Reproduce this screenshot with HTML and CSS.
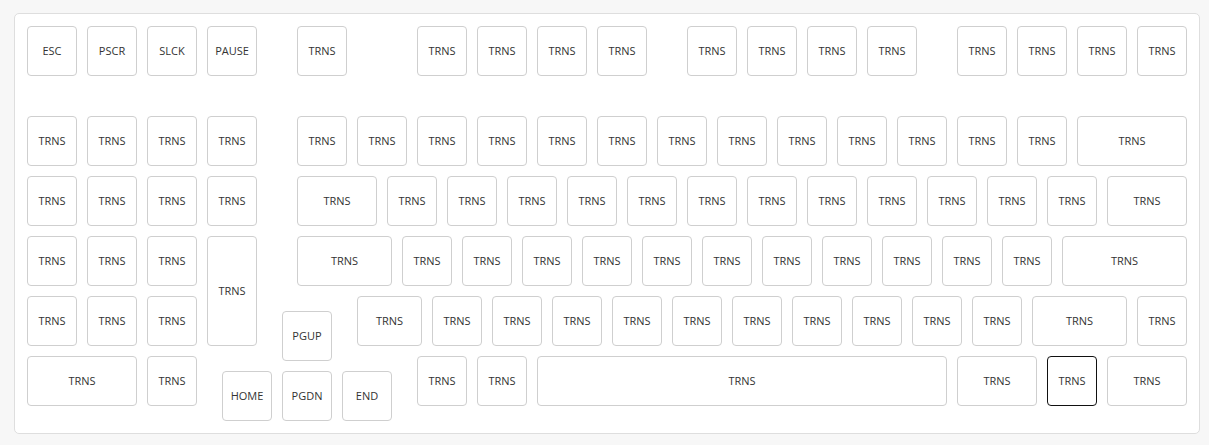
FILE: index.html
```html
<!DOCTYPE html>
<html lang="en">
<head>
<meta charset="utf-8">
<title>Keymap</title>
<link rel="stylesheet" href="styles.css">
</head>
<body>
<div class="panel">
  <div class="keyboard" id="keyboard"></div>
</div>
<script src="script.js"></script>
</body>
</html>
```

FILE: styles.css
```css
html, body {
  margin: 0;
  padding: 0;
}
body {
  background: #f7f7f7;
  font-family: "Open Sans", "Liberation Sans", sans-serif;
  padding: 13px 9px 0 14px;
}
.panel {
  background: #ffffff;
  border: 1px solid #dedede;
  border-radius: 5px;
  padding: 12px;
  width: 1160px;
  height: 395px;
}
.keyboard {
  position: relative;
  width: 1160px;
  height: 395px;
}
.key {
  position: absolute;
  box-sizing: border-box;
  border: 1px solid #cfcfcf;
  border-radius: 4px;
  background: #ffffff;
  display: flex;
  align-items: center;
  justify-content: center;
  padding-bottom: 2px;
  font-size: 11px;
  color: #333333;
}
.key.selected {
  border-color: #111111;
}
```

FILE: script.js
```js
(function () {
  var U = 60, GAP = 10;
  // [label, x, y, w, h, selected]
  var keys = [
    ["ESC",0,0],["PSCR",1,0],["SLCK",2,0],["PAUSE",3,0],["TRNS",4.5,0],
    ["TRNS",6.5,0],["TRNS",7.5,0],["TRNS",8.5,0],["TRNS",9.5,0],
    ["TRNS",11,0],["TRNS",12,0],["TRNS",13,0],["TRNS",14,0],
    ["TRNS",15.5,0],["TRNS",16.5,0],["TRNS",17.5,0],["TRNS",18.5,0]
  ];
  var i;
  // row 1.5
  for (i = 0; i < 4; i++) keys.push(["TRNS", i, 1.5]);
  for (i = 0; i < 13; i++) keys.push(["TRNS", 4.5 + i, 1.5]);
  keys.push(["TRNS", 17.5, 1.5, 2]);
  // row 2.5
  for (i = 0; i < 4; i++) keys.push(["TRNS", i, 2.5]);
  keys.push(["TRNS", 4.5, 2.5, 1.5]);
  for (i = 0; i < 12; i++) keys.push(["TRNS", 6 + i, 2.5]);
  keys.push(["TRNS", 18, 2.5, 1.5]);
  // row 3.5
  for (i = 0; i < 3; i++) keys.push(["TRNS", i, 3.5]);
  keys.push(["TRNS", 3, 3.5, 1, 2]);
  keys.push(["TRNS", 4.5, 3.5, 1.75]);
  for (i = 0; i < 11; i++) keys.push(["TRNS", 6.25 + i, 3.5]);
  keys.push(["TRNS", 17.25, 3.5, 2.25]);
  // row 4.5
  for (i = 0; i < 3; i++) keys.push(["TRNS", i, 4.5]);
  keys.push(["PGUP", 4.25, 4.75]);
  keys.push(["TRNS", 5.5, 4.5, 1.25]);
  for (i = 0; i < 10; i++) keys.push(["TRNS", 6.75 + i, 4.5]);
  keys.push(["TRNS", 16.75, 4.5, 1.75]);
  keys.push(["TRNS", 18.5, 4.5]);
  // row 5.5
  keys.push(["TRNS", 0, 5.5, 2]);
  keys.push(["TRNS", 2, 5.5]);
  keys.push(["HOME", 3.25, 5.75]);
  keys.push(["PGDN", 4.25, 5.75]);
  keys.push(["END", 5.25, 5.75]);
  keys.push(["TRNS", 6.5, 5.5]);
  keys.push(["TRNS", 7.5, 5.5]);
  keys.push(["TRNS", 8.5, 5.5, 7]);
  keys.push(["TRNS", 15.5, 5.5, 1.5]);
  keys.push(["TRNS", 17, 5.5, 1, 1, true]);
  keys.push(["TRNS", 18, 5.5, 1.5]);

  var board = document.getElementById("keyboard");
  keys.forEach(function (k) {
    var el = document.createElement("div");
    el.className = "key" + (k[5] ? " selected" : "");
    el.textContent = k[0];
    var w = k[3] || 1, h = k[4] || 1;
    el.style.left = (k[1] * U) + "px";
    el.style.top = (k[2] * U) + "px";
    el.style.width = (w * U - GAP) + "px";
    el.style.height = (h * U - GAP) + "px";
    board.appendChild(el);
  });
})();
```
